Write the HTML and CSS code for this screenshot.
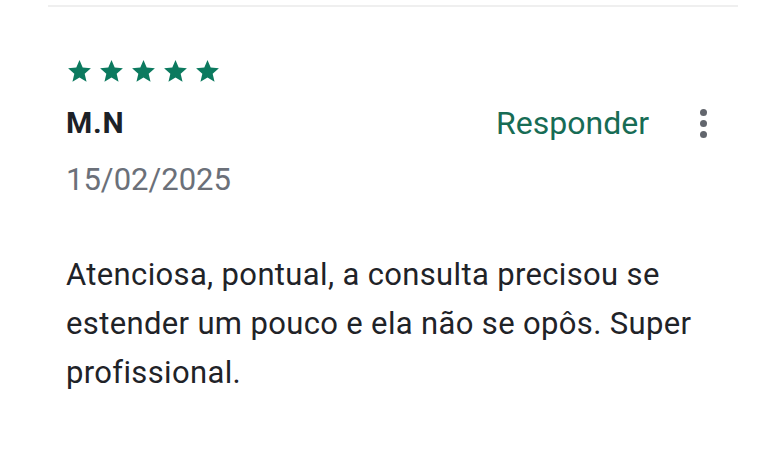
FILE: index.html
```html
<!DOCTYPE html>
<html lang="pt">
<head>
    <meta charset="UTF-8">
    <meta name="viewport" content="width=device-width, initial-scale=1.0">
    <title>Avaliação</title>
    <link rel="stylesheet" href="styles.css">
</head>
<body>
    <div class="divider"></div>

    <div class="review">
        <div class="stars">
            <svg viewBox="2 2 20 19.3" class="star"><path d="M12 17.27L18.18 21l-1.64-7.03L22 9.24l-7.19-.61L12 2 9.19 8.63 2 9.24l5.46 4.73L5.82 21z"/></svg>
            <svg viewBox="2 2 20 19.3" class="star"><path d="M12 17.27L18.18 21l-1.64-7.03L22 9.24l-7.19-.61L12 2 9.19 8.63 2 9.24l5.46 4.73L5.82 21z"/></svg>
            <svg viewBox="2 2 20 19.3" class="star"><path d="M12 17.27L18.18 21l-1.64-7.03L22 9.24l-7.19-.61L12 2 9.19 8.63 2 9.24l5.46 4.73L5.82 21z"/></svg>
            <svg viewBox="2 2 20 19.3" class="star"><path d="M12 17.27L18.18 21l-1.64-7.03L22 9.24l-7.19-.61L12 2 9.19 8.63 2 9.24l5.46 4.73L5.82 21z"/></svg>
            <svg viewBox="2 2 20 19.3" class="star"><path d="M12 17.27L18.18 21l-1.64-7.03L22 9.24l-7.19-.61L12 2 9.19 8.63 2 9.24l5.46 4.73L5.82 21z"/></svg>
        </div>

        <div class="review-head">
            <span class="author">M.N</span>
            <div class="actions">
                <a class="reply-link" href="#">Responder</a>
                <button class="more-btn" aria-label="Mais opções">
                    <span></span><span></span><span></span>
                </button>
            </div>
        </div>

        <div class="date">15/02/2025</div>

        <p class="review-text">Atenciosa, pontual, a consulta precisou se estender um pouco e ela não se opôs. Super profissional.</p>
    </div>
</body>
</html>
```

FILE: styles.css
```css
body {
    margin: 0;
    background: #fff;
    font-family: Roboto, "Noto Sans", sans-serif;
    color: #1f2328;
}
.divider {
    height: 2px;
    background: #efefef;
    margin: 5px 30px 0 48px;
}
.review {
    padding: 0 30px 0 66px;
}
.stars {
    display: flex;
    gap: 9px;
    margin-top: 53px;
    padding-left: 2px;
}
.star {
    width: 23px;
    height: 22px;
    fill: #0c7a5f;
}
.review-head {
    display: flex;
    justify-content: space-between;
    align-items: center;
    margin-top: 21px;
    height: 40px;
}
.author {
    font-size: 30px;
    font-weight: 700;
    line-height: 40px;
    letter-spacing: 0.8px;
    color: #1c2127;
}
.actions {
    display: flex;
    align-items: center;
    gap: 51px;
}
.reply-link {
    font-size: 32px;
    line-height: 40px;
    color: #176c55;
    text-decoration: none;
}
.more-btn {
    display: flex;
    flex-direction: column;
    gap: 4px;
    padding: 0;
    border: none;
    background: none;
    margin-right: 31px;
}
.more-btn span {
    width: 7px;
    height: 7px;
    border-radius: 50%;
    background: #62666d;
}
.date {
    margin-top: 17px;
    font-size: 31px;
    line-height: 40px;
    color: #6b7079;
}
.review-text {
    margin: 50px 0 0;
    font-size: 31px;
    line-height: 49px;
    letter-spacing: 0.35px;
    color: #1f2328;
}
```
